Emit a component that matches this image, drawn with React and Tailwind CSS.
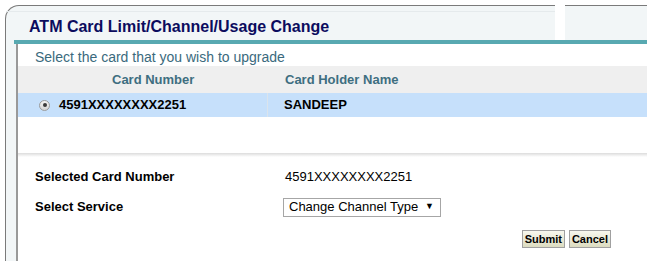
import React from 'react';

const font = { fontFamily: '"Liberation Sans", Arial, sans-serif' };

const Radio = () => (
    <span className="w-[11px] h-[11px] rounded-full border border-[#9c9c9c] bg-gradient-to-b from-[#f4f4f4] to-[#d6d6d6] flex items-center justify-center">
        <span className="w-[4px] h-[4px] rounded-full bg-[#3a3a3a]" />
    </span>
);

const App = () => {
    return (
        <div className="w-[647px] h-[261px] bg-white overflow-hidden pt-[5px] pl-[5px] text-[13px] text-black" style={font}>
            {/* header row */}
            <div className="flex h-[35px]">
                <div className="w-[550px] rounded-tl-[14px] border-l border-t border-[#7a7a7a] bg-[#f2f6f7] pt-[5px]">
                    <div className="h-full border-t border-[#e5eaec] pl-[23px] pt-[3px] text-[16px] font-bold text-[#0c0c5e]">
                        ATM Card Limit/Channel/Usage Change
                    </div>
                </div>
                <div className="w-[10px] bg-white" />
                <div className="flex-1 border-t border-[#7a7a7a] bg-[#f2f6f7]" />
            </div>

            {/* body */}
            <div className="border-l border-[#7a7a7a] bg-[#f2f6f7] pl-[8px] h-[230px]">
                <div className="h-full border-t-4 border-[#58a9b1] flex">
                    <div className="w-[2px] bg-[#f2f6f7]" />
                    <div className="flex-1 bg-white border-l-2 border-[#999999]">
                        <div className="h-[22px] pl-[17px] pt-[3px] text-[14px] text-[#3a6a7d]">
                            Select the card that you wish to upgrade
                        </div>
                        <div className="flex h-[27px] items-center bg-[#efefef] font-bold text-[#3e6e80]">
                            <div className="w-[250px] pl-[94px]">Card Number</div>
                            <div className="pl-[17px]">Card Holder Name</div>
                        </div>
                        <div className="flex h-[24px] bg-[#c6e0fb] font-bold">
                            <div className="w-[250px] flex items-center pl-[21px] gap-[9px] border-r border-[#dbe4ec]">
                                <Radio />
                                <span>4591XXXXXXXX2251</span>
                            </div>
                            <div className="flex items-center pl-[16px]">SANDEEP</div>
                        </div>
                        <div className="h-[36px]" />
                        <div className="h-[4px] bg-gradient-to-b from-[#dcdcdc] to-white" />

                        <div className="pl-[17px] pt-[10px]">
                            <div className="flex h-[20px] items-center">
                                <div className="w-[250px] font-bold">Selected Card Number</div>
                                <div>4591XXXXXXXX2251</div>
                            </div>
                            <div className="flex h-[24px] items-center mt-[8px]">
                                <div className="w-[248px] font-bold">Select Service</div>
                                <div className="w-[158px] h-[19px] border border-[#a6a6a6] flex items-center justify-between pl-[5px] pr-[6px] bg-white">
                                    <span>Change Channel Type</span>
                                    <span className="text-[9px]">▼</span>
                                </div>
                            </div>
                            <div className="flex justify-end gap-[4px] pr-[36px] mt-[11px]">
                                <button className="h-[18px] px-[2px] border border-[#a0a0a0] bg-gradient-to-b from-[#f7f7ee] to-[#dcdcc0] text-[11px] font-bold leading-none text-black">
                                    Submit
                                </button>
                                <button className="h-[18px] px-[2px] border border-[#a0a0a0] bg-gradient-to-b from-[#f7f7ee] to-[#dcdcc0] text-[11px] font-bold leading-none text-black">
                                    Cancel
                                </button>
                            </div>
                        </div>
                    </div>
                </div>
            </div>
        </div>
    );
};

export default App;
